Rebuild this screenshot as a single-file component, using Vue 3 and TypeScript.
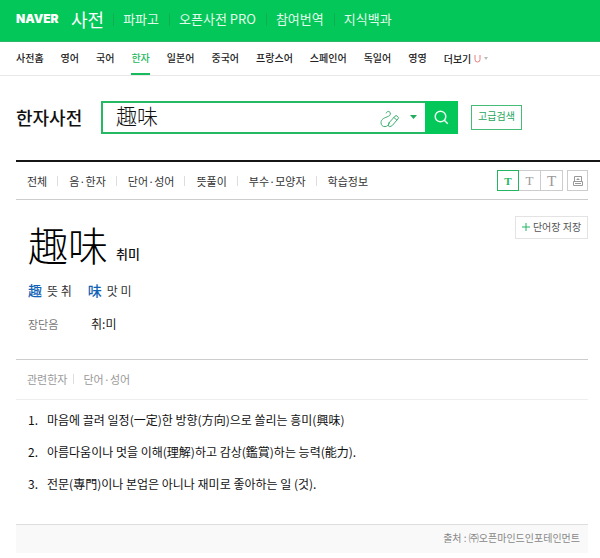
<script setup lang="ts">
import { ref } from 'vue'

const services = ['파파고', '오픈사전 PRO', '참여번역', '지식백과']
const languages = ['사전홈', '영어', '국어', '한자', '일본어', '중국어', '프랑스어', '스페인어', '독일어', '영영']
const currentLanguage = '한자'
const tabs = ['전체', '음·한자', '단어·성어', '뜻풀이', '부수·모양자', '학습정보']
const related = ['관련한자', '단어·성어']
const sizes = ['small', 'medium', 'large']
const characters = [
  { glyph: '趣', reading: '뜻 취' },
  { glyph: '味', reading: '맛 미' },
]
const meanings = [
  '마음에 끌려 일정(一定)한 방향(方向)으로 쏠리는 흥미(興味)',
  '아름다움이나 멋을 이해(理解)하고 감상(鑑賞)하는 능력(能力).',
  '전문(專門)이나 본업은 아니나 재미로 좋아하는 일 (것).',
]

const query = ref('趣味')
const textSize = ref('small')
</script>

<template>
  <div class="page">
    <header class="top">
      <a class="logo" href="#">NAVER</a>
      <a class="brand" href="#">사전</a>
      <nav class="services">
        <a v-for="s in services" :key="s" href="#">{{ s }}</a>
      </nav>
    </header>

    <nav class="languages">
      <a v-for="l in languages" :key="l" href="#" :class="{ active: l === currentLanguage }">{{ l }}</a>
      <a class="more" href="#">
        더보기
        <svg width="7" height="8" viewBox="0 0 7 8" fill="none" stroke="#e87f7f">
          <path d="M1 0V4.500a2.500 2.500 0 0 0 5 0V0" />
        </svg>
        <svg width="4" height="3" viewBox="0 0 4 3" fill="#bbb"><path d="M0 0h4L2 3z" /></svg>
      </a>
    </nav>

    <form class="search" @submit.prevent>
      <h1>한자사전</h1>
      <div class="box">
        <input v-model="query" type="text" aria-label="검색어" />
        <button class="pen" type="button" aria-label="필기 입력">
          <svg width="20" height="18" viewBox="0 0 20 18" fill="none" stroke="#3dae70" stroke-linecap="round" stroke-linejoin="round">
            <path d="M6.200 3C6.500 1.200 9.600 0.600 10.300 3c.5 2-1 3-3.200 3.900C3.600 8.100 1 9.600 1 12.600c0 2.500 1.700 4.200 4 4 2.500-.2 3.500-1.700 4.200-3.600" />
            <path d="M9.300 12.500l5.700-6.300q1-1 2-.2l.9.800q1 1 .1 2L12.500 15.300q-1.500 1.300-3 1.300-1.200 0-1-1.500.1-1.400.8-2.600z" />
            <path d="M14 7.600l2.900 2.600" />
          </svg>
        </button>
        <button class="drop" type="button" aria-label="자동완성">
          <svg width="7" height="4" viewBox="0 0 7 4" fill="#21ad5b"><path d="M0 0h7L3.500 4z" /></svg>
        </button>
        <button class="go" type="submit" aria-label="검색">
          <svg width="15" height="15" viewBox="0 0 15 15" fill="none" stroke="#e6ffef" stroke-width="1.500">
            <circle cx="6.500" cy="6.500" r="5.300" /><path d="M10.300 10.300L13.800 13.800" />
          </svg>
        </button>
      </div>
      <button class="advanced" type="button">고급검색</button>
    </form>

    <main>
      <div class="toolbar">
        <nav class="tabs">
          <a v-for="t in tabs" :key="t" href="#">{{ t }}</a>
        </nav>
        <div class="tools">
          <div class="sizes">
            <button
              v-for="s in sizes"
              :key="s"
              type="button"
              :class="[s, { active: s === textSize }]"
              @click="textSize = s"
            >T</button>
          </div>
          <button class="print" type="button" aria-label="인쇄">
            <svg width="10" height="10" viewBox="0 0 10 10" fill="none" stroke="#999">
              <path d="M1.500 5.500V0.500H8.500V5.500M0.500 5.500H9.500V9.500H0.500ZM3.500 3.500H6.500M5 2V3M2 7.500H8" />
            </svg>
          </button>
        </div>
      </div>

      <section class="entry">
        <div class="headword">
          <h2>趣味</h2>
          <span>취미</span>
          <button class="save" type="button">
            <svg width="8" height="8" viewBox="0 0 8 8" stroke="#21b55f"><path d="M4 0V8M0 4H8" /></svg>
            단어장 저장
          </button>
        </div>
        <div class="characters">
          <span v-for="c in characters" :key="c.glyph"><a href="#">{{ c.glyph }}</a>{{ c.reading }}</span>
        </div>
        <dl class="sound">
          <dt>장단음</dt>
          <dd>취:미</dd>
        </dl>
      </section>

      <nav class="related">
        <a v-for="r in related" :key="r" href="#">{{ r }}</a>
      </nav>

      <ol class="meanings">
        <li v-for="(m, i) in meanings" :key="m"><span>{{ i + 1 }}.</span>{{ m }}</li>
      </ol>

      <footer>출처 : ㈜오픈마인드인포테인먼트</footer>
    </main>
  </div>
</template>

<style>
body {
  margin: 0;
  background: #fff;
}
</style>

<style scoped>
.page {
  font-family: 'Noto Sans CJK KR', 'Noto Sans', sans-serif;
  font-size: 12px;
  line-height: 16px;
  color: #222;
  white-space: nowrap;
}
.page * {
  box-sizing: border-box;
}
a {
  color: inherit;
  text-decoration: none;
}
button,
input {
  font-family: inherit;
  margin: 0;
  padding: 0;
  border: 0;
  background: none;
  line-height: 16px;
}
button {
  display: flex;
  align-items: center;
  justify-content: center;
}
h1,
h2,
dl,
dd,
ol {
  margin: 0;
  padding: 0;
}

.top {
  display: flex;
  align-items: center;
  height: 42px;
  padding: 0 16px 3px;
  background: #04c75a;
  border-bottom: 1px solid #2cb868;
  color: #fff;
}
.logo {
  width: 55px;
  font-family: Inter, sans-serif;
  font-size: 12px;
  font-weight: 900;
}
.brand {
  padding-right: 9px;
  font-size: 18px;
}
.services {
  display: flex;
  font-size: 13px;
  color: #e2f9eb;
}
.services a {
  display: flex;
  align-items: center;
  padding-right: 10px;
}
.services a::before {
  content: '';
  width: 1px;
  height: 13px;
  margin-right: 9px;
  background: #12ae52;
}

.languages {
  display: flex;
  gap: 17px;
  height: 34px;
  padding: 0 16px;
  border-bottom: 1px solid #e8e8e8;
  font-size: 10px;
  font-weight: 500;
  line-height: 32px;
}
.languages .active {
  color: #1cb85e;
  border-bottom: 2px solid #16bb5e;
}
.more {
  display: flex;
  align-items: center;
  gap: 3px;
}

.search {
  display: flex;
  align-items: center;
  height: 84px;
  padding: 0 16px 2px;
}
h1 {
  width: 85px;
  font-size: 18px;
  font-weight: 500;
  line-height: 24px;
  color: #111;
}
.box {
  flex: 0 1 357px;
  display: flex;
  height: 33px;
  border: 2px solid #25b964;
  border-right: 0;
}
.box input {
  flex: 1;
  min-width: 0;
  padding: 0 0 4px 13px;
  font-size: 21px;
  font-weight: 300;
  line-height: 24px;
  color: #111;
  outline: 0;
}
.pen {
  width: 24px;
  padding-top: 3px;
}
.drop {
  width: 23px;
}
.go {
  width: 33px;
  margin: -2px 0;
  background: #04c75a;
}
.advanced {
  width: 51px;
  height: 25px;
  margin-left: 13px;
  padding-bottom: 2px;
  border: 1px solid #45bd78;
  font-size: 10px;
  color: #25a75e;
}

main {
  margin-left: 16px;
  border-top: 2px solid #161616;
}
.toolbar {
  display: flex;
  align-items: center;
  justify-content: space-between;
  height: 38px;
  margin-right: 12px;
  padding-left: 11px;
  border-bottom: 1px solid #ccc;
}
.tabs {
  display: flex;
  font-size: 11px;
  color: #333;
}
.tabs a,
.related a {
  display: flex;
  align-items: center;
}
.tabs a + a::before,
.related a + a::before {
  content: '';
  width: 1px;
  height: 10px;
  margin: 0 11px 0 10px;
  background: #ddd;
}
.tools {
  display: flex;
  gap: 4px;
}
.sizes {
  display: flex;
}
.sizes button,
.print {
  width: 22px;
  height: 21px;
  border: 1px solid #ccc;
  color: #999;
}
.print {
  width: 21px;
}
.sizes button {
  font-family: 'Liberation Serif', serif;
}
.sizes button + button {
  border-left: 0;
}
.sizes .small {
  font-size: 11px;
}
.sizes .medium {
  font-size: 13px;
}
.sizes .large {
  font-size: 15px;
}
.sizes .active {
  border: 1px solid #25b562;
  font-weight: 700;
  color: #1cb85e;
}

.entry {
  margin-right: 12px;
  padding: 16px 0 27px 12px;
  border-bottom: 1px solid #ccc;
}
.headword {
  display: flex;
  align-items: flex-start;
  color: #111;
}
h2 {
  padding-top: 6px;
  font-size: 40px;
  font-weight: 300;
  line-height: 44px;
  color: #000;
}
.headword span {
  padding: 30px 0 0 8px;
  font-size: 13px;
  font-weight: 500;
}
.save {
  width: 73px;
  height: 23px;
  margin-left: auto;
  padding-bottom: 2px;
  gap: 3px;
  border: 1px solid #e3e3e3;
  font-size: 10px;
  color: #555;
}
.characters {
  display: flex;
  gap: 16px;
  padding-top: 16px;
  color: #333;
}
.characters a {
  margin-right: 5px;
  font-size: 14px;
  font-weight: 500;
  color: #0f62b4;
}
.sound {
  display: flex;
  padding-top: 17px;
}
.sound dt {
  width: 63px;
  font-size: 11px;
  color: #777;
}
.sound dd {
  font-size: 12px;
}

.related {
  display: flex;
  align-items: center;
  height: 40px;
  margin-right: 12px;
  padding: 0 0 2px 11px;
  border-bottom: 1px solid #eee;
  font-size: 11px;
  color: #999;
}
.related a + a::before {
  margin: 0 9px 0 6px;
}

.meanings {
  display: flex;
  flex-direction: column;
  gap: 16px;
  padding: 12px 12px 32px;
  list-style: none;
  color: #111;
}
.meanings li {
  display: flex;
}
.meanings span {
  width: 19px;
}

footer {
  height: 29px;
  margin-right: 12px;
  padding: 5px 8px 0 0;
  border-top: 1px solid #ddd;
  background: #f9f9f9;
  font-size: 10px;
  text-align: right;
  color: #888;
}
</style>
